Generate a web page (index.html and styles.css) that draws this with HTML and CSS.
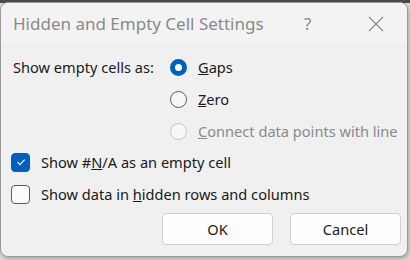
FILE: index.html
```html
<!DOCTYPE html>
<html>
<head>
<meta charset="utf-8">
<link rel="stylesheet" href="styles.css">
</head>
<body>
<div class="dialog">
  <div class="titlebar">
    <span class="title">Hidden and Empty Cell Settings</span>
    <span class="help">?</span>
    <svg class="close" width="16" height="16" viewBox="0 0 16 16"><path d="M1 1L15 15M15 1L1 15" stroke="#8a8a8a" stroke-width="1.2" fill="none"/></svg>
  </div>
  <div class="content">
    <div class="empty-row">
      <span class="label">Show empty cells as:</span>
      <div class="radios">
        <div class="opt"><span class="radio checked"></span><span><u>G</u>aps</span></div>
        <div class="opt"><span class="radio"></span><span><u>Z</u>ero</span></div>
        <div class="opt disabled"><span class="radio"></span><span><u>C</u>onnect data points with line</span></div>
      </div>
    </div>
    <div class="checks">
      <div class="opt"><span class="box checked"><svg width="12" height="12" viewBox="0 0 12 12"><path d="M2.5 6.2L5 8.6L9.6 3.6" stroke="#fff" stroke-width="1.1" fill="none"/></svg></span><span>Show #<u>N</u>/A as an empty cell</span></div>
      <div class="opt"><span class="box"></span><span>Show data in <u>h</u>idden rows and columns</span></div>
    </div>
    <div class="buttons">
      <button class="btn">OK</button>
      <button class="btn">Cancel</button>
    </div>
  </div>
</div>
</body>
</html>
```
FILE: styles.css
```css
html, body {
  margin: 0;
  padding: 0;
}
body {
  width: 410px;
  height: 260px;
  overflow: hidden;
  background: linear-gradient(#4a4a4a 0 3px, #dcdcdc 3px);
  font-family: "Noto Sans", "Open Sans", sans-serif;
  color: #1a1a1a;
}
.dialog {
  margin-top: 2px;
  width: 406px;
  height: 253px;
  background: #f0f0f0;
  border: 1px solid #9a9a9a;
  border-radius: 8px;
  box-shadow: 1px 2px 4px rgba(0,0,0,0.25);
  display: flex;
  flex-direction: column;
  overflow: hidden;
}
.titlebar {
  height: 40px;
  background: #f3f3f3;
  display: flex;
  align-items: center;
  padding-left: 12px;
  flex-shrink: 0;
}
.title {
  font-size: 17px;
  color: #8a8a8a;
  width: 291px;
  white-space: nowrap;
}
.help {
  font-size: 17px;
  color: #8a8a8a;
  width: 64px;
}
.close {
  margin-top: 1px;
}
.content {
  padding: 14px 0 0 12px;
  font-size: 14.6px;
  line-height: 20px;
  flex: 1;
  display: flex;
  flex-direction: column;
}
.empty-row {
  display: flex;
}
.label {
  width: 157px;
}
.radios {
  display: flex;
  flex-direction: column;
  gap: 12px;
}
.opt {
  display: flex;
  align-items: center;
  gap: 11px;
  height: 20px;
  white-space: nowrap;
}
.radio {
  width: 17px;
  height: 17px;
  border: 1px solid #5a5a5a;
  border-radius: 50%;
  box-sizing: border-box;
  background: #f7f7f7;
  flex-shrink: 0;
}
.radio.checked {
  border: 5px solid #0060c0;
  background: #fff;
}
.disabled {
  color: #8a8a8a;
}
.disabled .radio {
  border-color: #c6c6c6;
  background: #f7f7f7;
}
.checks {
  margin-top: 11px;
  margin-left: -2px;
  display: flex;
  flex-direction: column;
  gap: 12px;
}
.box {
  width: 19px;
  height: 19px;
  box-sizing: border-box;
  border: 1px solid #5a5a5a;
  border-radius: 4px;
  background: #fbfbfb;
  display: flex;
  align-items: center;
  justify-content: center;
  flex-shrink: 0;
}
.box.checked {
  background: #0060c0;
  border-color: #0060c0;
}
.buttons {
  margin-top: 9px;
  display: flex;
  justify-content: flex-end;
  gap: 17px;
  padding-right: 6px;
}
.btn {
  width: 111px;
  height: 32px;
  border: 1px solid #d0d0d0;
  border-radius: 4px;
  background: #fdfdfd;
  font-family: inherit;
  font-size: 14.6px;
  color: #1a1a1a;
  padding: 0;
}
```
